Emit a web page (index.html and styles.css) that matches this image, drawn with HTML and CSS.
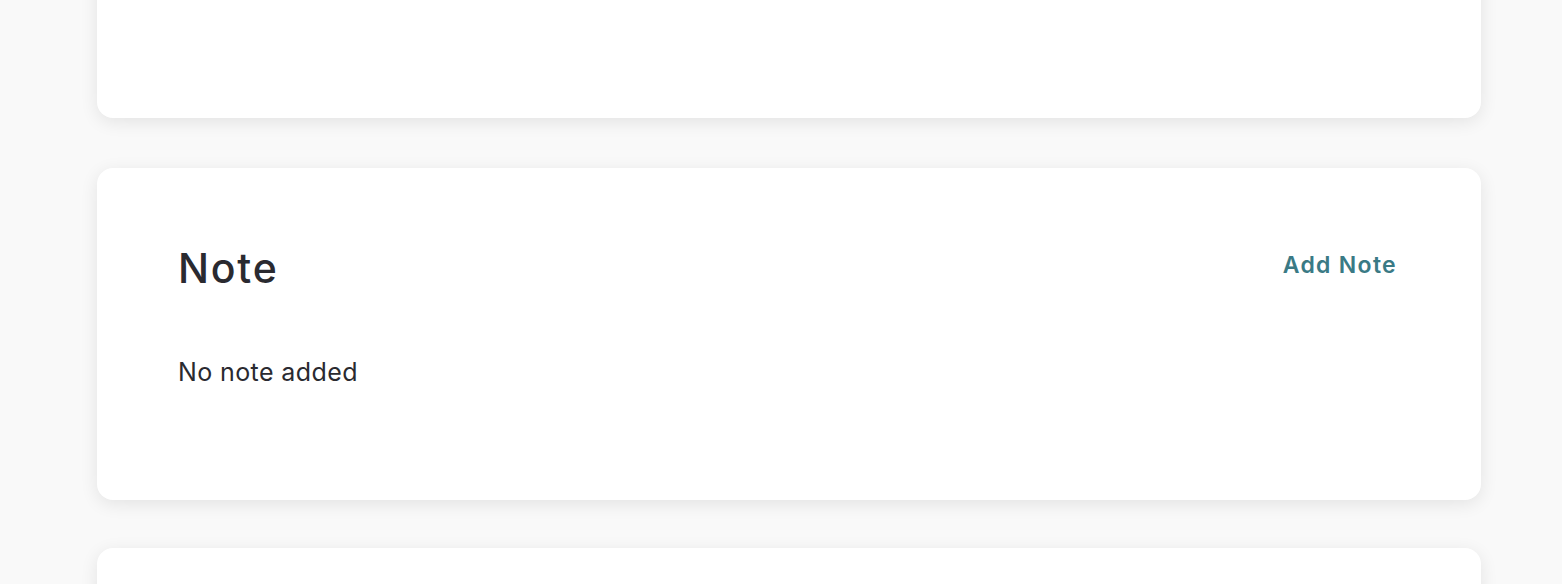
FILE: index.html
```html
<!DOCTYPE html>
<html>
<head>
    <meta charset="utf-8">
    <title>Order details</title>
    <link rel="stylesheet" href="styles.css">
</head>
<body>
    <div class="page">
        <!-- previous section, scrolled mostly out of view -->
        <section class="card card-prev"></section>

        <!-- Note -->
        <section class="card note-card">
            <div class="card-head">
                <h2 class="card-title">Note</h2>
                <a href="#" class="card-action">Add Note</a>
            </div>
            <p class="note-empty">No note added</p>
        </section>

        <!-- next section -->
        <section class="card card-next"></section>
    </div>
</body>
</html>
```

FILE: styles.css
```css
html, body {
    margin: 0;
    padding: 0;
    background: #f9f9f9;
    font-family: Inter, "Noto Sans", sans-serif;
    color: #2a2a30;
    overflow: hidden;
}

.page {
    display: flex;
    flex-direction: column;
    gap: 48px;
    padding: 0 81px 0 97px;
}

.card {
    background: #fff;
    border-radius: 16px;
    box-shadow: 0 4px 18px rgba(0, 0, 0, 0.09);
}

.card-prev {
    margin-top: -200px;
    margin-bottom: 2px;
    height: 318px;
}

.card-next {
    height: 200px;
}

.note-card {
    padding: 80px 84px 108px 81px;
}

.card-head {
    display: flex;
    justify-content: space-between;
    align-items: flex-start;
}

.card-title {
    margin: 0;
    font-size: 41px;
    line-height: 40px;
    font-weight: 500;
    letter-spacing: 1.8px;
}

.card-action {
    margin-top: 1px;
    font-size: 23px;
    line-height: 33px;
    font-weight: 600;
    letter-spacing: 1.3px;
    color: #3a7a85;
    text-decoration: none;
}

.note-empty {
    margin: 65px 0 0;
    font-size: 25px;
    line-height: 39px;
    font-weight: 400;
    letter-spacing: 0.4px;
}
```
